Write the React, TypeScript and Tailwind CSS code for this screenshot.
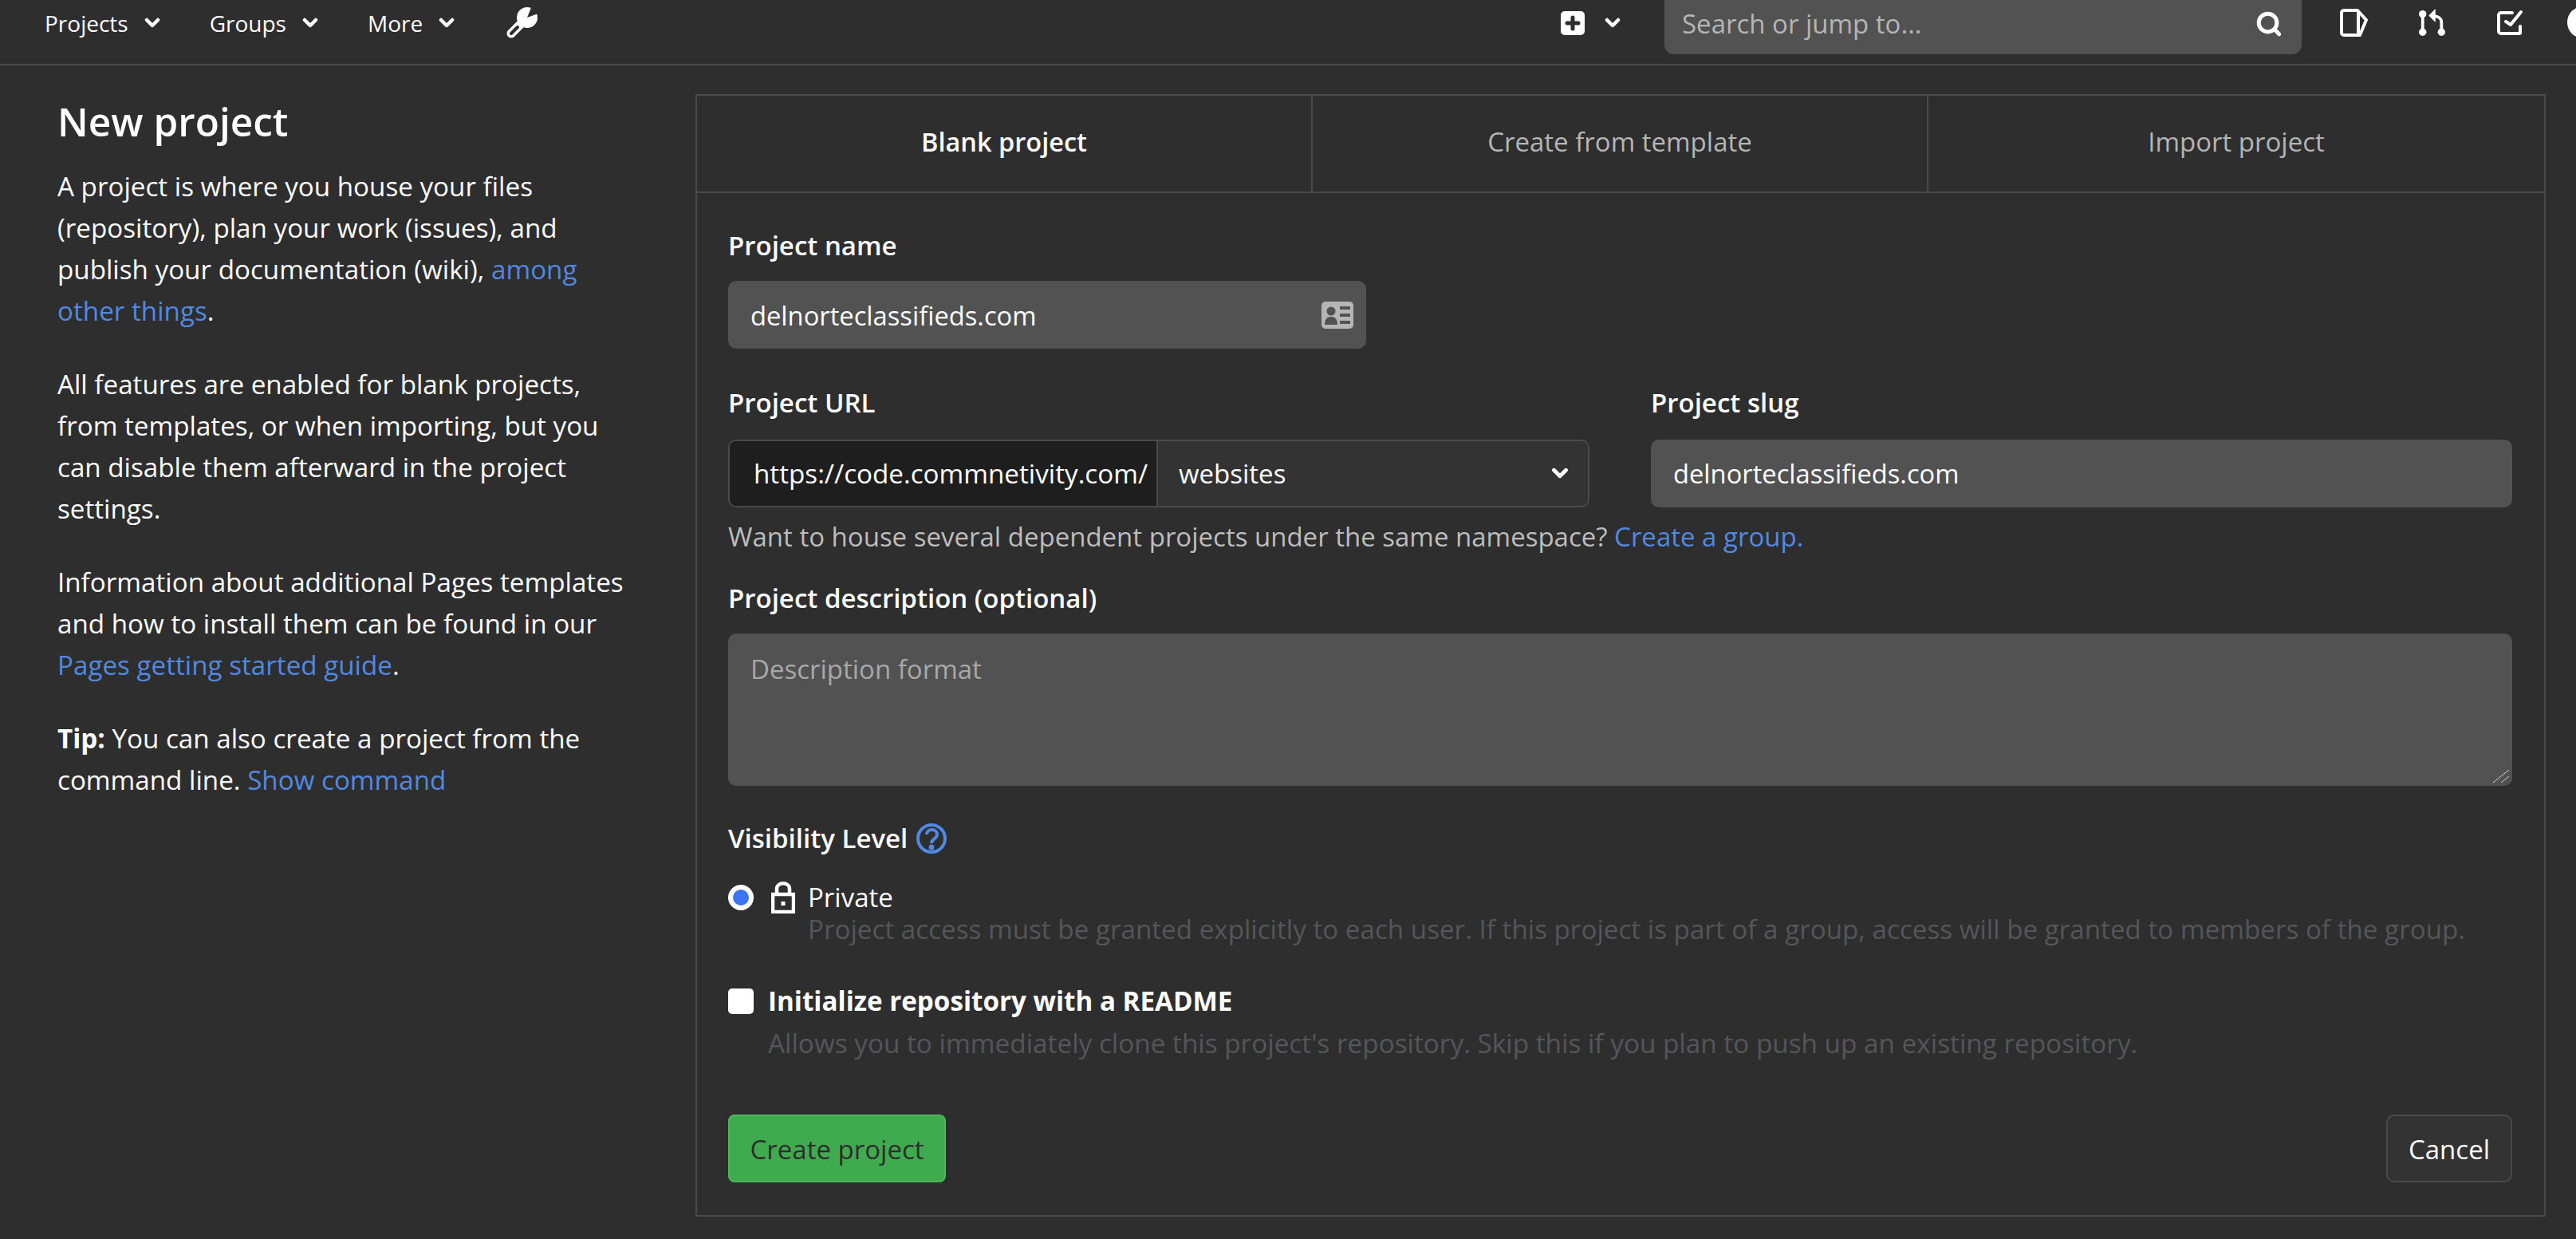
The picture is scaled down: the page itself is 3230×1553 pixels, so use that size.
import type { ReactNode } from "react";
import { Search } from "lucide-react";

const font = "font-['Open_Sans','Liberation_Sans',sans-serif]";

function Chevron({ className = "w-[20px] h-[14px]" }: { className?: string }) {
  return (
    <svg viewBox="0 0 20 14" className={className} fill="none" stroke="white" strokeWidth="4.5" strokeLinecap="round" strokeLinejoin="round">
      <path d="M3 3l7 7 7-7" />
    </svg>
  );
}

function NavItem({ label }: { label: string }) {
  return (
    <div className="flex items-center gap-[20px] text-[28px] font-medium text-white">
      <span>{label}</span>
      <Chevron />
    </div>
  );
}

function WrenchIcon() {
  return (
    <svg viewBox="0 0 40 40" className="w-[40px] h-[40px] ml-[2px]">
      <circle cx="27" cy="13" r="13" fill="white" />
      <path d="M27 13L33 -2L46 6z" fill="#2e2e2e" />
      <path d="M7 33L22 18" stroke="white" strokeWidth="11" strokeLinecap="round" />
      <path d="M7 33L15 25" stroke="#2e2e2e" strokeWidth="4" strokeLinecap="round" />
    </svg>
  );
}

function IssueIcon() {
  return (
    <svg viewBox="0 0 35 35" className="w-[35px] h-[35px]" fill="none" stroke="white" strokeWidth="4" strokeLinejoin="round">
      <path d="M5 2h17l11 12-8 19H5a3 3 0 01-3-3V5a3 3 0 013-3z" />
      <path d="M23 3v29" />
    </svg>
  );
}

function MergeIcon() {
  return (
    <svg viewBox="0 0 36 36" className="w-[34px] h-[36px]" fill="none">
      <circle cx="5" cy="7" r="5" fill="white" />
      <circle cx="5" cy="31" r="5" fill="white" />
      <circle cx="30" cy="31" r="5" fill="white" />
      <path d="M5 8v22" stroke="white" strokeWidth="4" />
      <path d="M30 30V18c0-5-4-8-10-8" stroke="white" strokeWidth="4" />
      <path d="M22 0l-9 9 9 9z" fill="white" />
    </svg>
  );
}

function TodoIcon() {
  return (
    <svg viewBox="0 0 33 32" className="w-[33px] h-[32px]" fill="none" stroke="white" strokeWidth="4" strokeLinecap="round" strokeLinejoin="round">
      <path d="M19 4H5a3 3 0 00-3 3v20a3 3 0 003 3h23a1 1 0 001-1v-8" />
      <path d="M11 15l6 4 13-16" />
    </svg>
  );
}

function Field({ label, children, className, gap = "mt-[22px]" }: { label: string; children: ReactNode; className?: string; gap?: string }) {
  return (
    <div className={className}>
      <div className="h-[44px] leading-[44px] text-[33px] font-semibold text-white">{label}</div>
      <div className={gap}>{children}</div>
    </div>
  );
}

export default function App() {
  return (
    <div className={`w-[3230px] h-[1553px] overflow-hidden bg-[#2e2e2e] text-white ${font}`}>
      {/* top nav */}
      <header className="h-[82px] border-b-2 border-[#4a4a4a] flex items-start overflow-hidden">
        <nav className="flex items-center h-[58px] pl-[56px] gap-[62px]">
          <NavItem label="Projects" />
          <NavItem label="Groups" />
          <NavItem label="More" />
          <WrenchIcon />
        </nav>
        <div className="ml-auto -mr-[29px] flex items-start shrink-0">
          <div className="flex items-center h-[58px] gap-[25px] mr-[55px]">
            <div className="w-[30px] h-[30px] rounded-[5px] bg-white flex items-center justify-center">
              <svg viewBox="0 0 20 20" className="w-[20px] h-[20px]" stroke="#2e2e2e" strokeWidth="5" strokeLinecap="round">
                <path d="M3 10h14M10 3v14" />
              </svg>
            </div>
            <Chevron />
          </div>
          <div className="w-[799px] h-[68px] rounded-b-[12px] bg-[#525252] flex items-center justify-between pl-[22px] pr-[24px] pb-[8px]">
            <span className="text-[33px] text-[#b5b5b5]">Search or jump to...</span>
            <Search className="w-[34px] h-[34px]" strokeWidth={3.5} />
          </div>
          <div className="flex items-center h-[56px] pl-[48px] gap-[64px]">
            <IssueIcon />
            <MergeIcon />
            <TodoIcon />
            <div className="w-[40px] h-[40px] rounded-full bg-white ml-[-9px]" />
          </div>
        </div>
      </header>

      <main className="flex pt-[36px] pl-[72px]">
        {/* left text */}
        <aside className="w-[800px] pr-[78px] text-[33.2px] leading-[52px] text-white">
          <h1 className="text-[49.5px] font-semibold leading-[60px] mt-[4px] mb-[26px]">New project</h1>
          <p>A project is where you house your files (repository), plan your work (issues), and publish your documentation (wiki), <span className="text-[#5289e0]">among other things</span>.</p>
          <p className="mt-[40px]">All features are enabled for blank projects, from templates, or when importing, but you can disable them afterward in the project settings.</p>
          <p className="mt-[40px]">Information about additional Pages templates and how to install them can be found in our <span className="text-[#5289e0]">Pages getting started guide</span>.</p>
          <p className="mt-[40px]"><b className="font-bold">Tip:</b> You can also create a project from the command line. <span className="text-[#5289e0]">Show command</span></p>
        </aside>

        {/* form card */}
        <section className="w-[2320px] h-[1407px] border-2 border-[#4a4a4a] text-[33px]">
          <div className="grid grid-cols-[770px_772px_1fr] h-[122px] border-b-2 border-[#4a4a4a] text-center leading-[116px]">
            <div className="font-semibold text-[32.5px]">Blank project</div>
            <div className="border-l-2 border-[#4a4a4a] text-[#b5b5b5]">Create from template</div>
            <div className="border-l-2 border-[#4a4a4a] text-[#b5b5b5]">Import project</div>
          </div>

          <div className="pl-[39px] pr-[40px] pt-[44px] pb-[40px]">
            <Field label="Project name">
              <div className="w-[800px] h-[85px] rounded-[10px] bg-[#525252] flex items-center justify-between pl-[28px] pr-[16px]">
                <span className="text-[32.7px] pt-[3px]">delnorteclassifieds.com</span>
                <svg viewBox="0 0 40 34" className="w-[40px] h-[34px]">
                  <rect width="40" height="34" rx="5" fill="#b5b5b5" />
                  <circle cx="12" cy="12" r="5.5" fill="#525252" />
                  <path d="M4 29c0-7 3-10 8-10s8 3 8 10z" fill="#525252" />
                  <path d="M23 8h13M23 17h13M23 26h13" stroke="#525252" strokeWidth="4" />
                </svg>
              </div>
            </Field>

            <div className="flex gap-[77px] mt-[46px]">
              <Field label="Project URL" className="w-[1080px]" gap="mt-[24px]">
                <div className="h-[85px] rounded-[10px] border-2 border-[#4a4a4a] bg-[#333333] flex overflow-hidden">
                  <div className="w-[537px] bg-[#1e1e1e] border-r-2 border-[#4a4a4a] pl-[30px] text-[33.2px] leading-[81px] whitespace-nowrap">https://code.commnetivity.com/</div>
                  <div className="flex-1 flex items-center justify-between pl-[26px] pr-[24px]">
                    <span>websites</span>
                    <Chevron className="w-[22px] h-[15px]" />
                  </div>
                </div>
              </Field>
              <Field label="Project slug" className="flex-1" gap="mt-[24px]">
                <div className="h-[85px] rounded-[10px] bg-[#525252] flex items-center pl-[28px] text-[32.7px]">delnorteclassifieds.com</div>
              </Field>
            </div>

            <p className="mt-[14px] leading-[46px] text-[#bdbdbd]">Want to house several dependent projects under the same namespace? <span className="text-[#5289e0]">Create a group.</span></p>

            <div className="mt-[32px] h-[44px] leading-[44px] font-semibold">Project description (optional)</div>
            <div className="mt-[22px] h-[191px] rounded-[10px] bg-[#525252] pl-[28px] pt-[20px] text-[#a8a8a8] relative">
              Description format
              <svg viewBox="0 0 20 16" className="absolute right-[4px] bottom-[4px] w-[20px] h-[16px]" stroke="#cccccc" strokeWidth="1">
                <path d="M0 16L20 0M10 16L20 8" />
              </svg>
            </div>

            <div className="mt-[44px] flex items-center gap-[10px] h-[44px]">
              <span className="font-semibold">Visibility Level</span>
              <svg viewBox="0 0 40 40" className="w-[40px] h-[40px]" fill="none" stroke="#5289e0" strokeWidth="4">
                <circle cx="20" cy="20" r="17" />
                <path d="M14 15c0-8 13-8 13 0 0 6-7 5-7 11" />
                <circle cx="20" cy="31" r="1.5" fill="#5289e0" />
              </svg>
            </div>

            <div className="mt-[32px] flex">
              <div className="w-[32px] h-[32px] rounded-full bg-[#3b74f5] border-[6px] border-white mt-[4px]" />
              <svg viewBox="0 0 30 40" className="w-[30px] h-[40px] ml-[22px]" fill="none" stroke="white" strokeWidth="4.5">
                <path d="M7 16V9c0-9 16-9 16 0v7" />
                <rect x="2" y="16" width="26" height="22" />
                <rect x="12.5" y="25" width="5" height="5" fill="white" stroke="none" />
              </svg>
              <div className="ml-[16px] leading-[40px]">
                <div>Private</div>
                <div className="text-[33.2px] text-[#55555c] whitespace-nowrap">Project access must be granted explicitly to each user. If this project is part of a group, access will be granted to members of the group.</div>
              </div>
            </div>

            <div className="mt-[52px] flex">
              <div className="w-[32px] h-[32px] rounded-[5px] bg-white mt-[2px]" />
              <div className="ml-[18px]">
                <div className="font-bold leading-[36px] text-[33.2px]">Initialize repository with a README</div>
                <div className="mt-[14px] text-[33.3px] leading-[40px] text-[#55555c] whitespace-nowrap">Allows you to immediately clone this project's repository. Skip this if you plan to push up an existing repository.</div>
              </div>
            </div>

            <div className="mt-[70px] flex justify-between">
              <div className="w-[273px] h-[85px] rounded-[8px] bg-[#40ab4e] border-2 border-[#4db85b] text-[#2e2e2e] flex items-center justify-center pt-[2px]">Create project</div>
              <div className="w-[158px] h-[85px] rounded-[10px] bg-[#333333] border-2 border-[#4a4a4a] flex items-center justify-center pt-[2px]">Cancel</div>
            </div>
          </div>
        </section>
      </main>
    </div>
  );
}
